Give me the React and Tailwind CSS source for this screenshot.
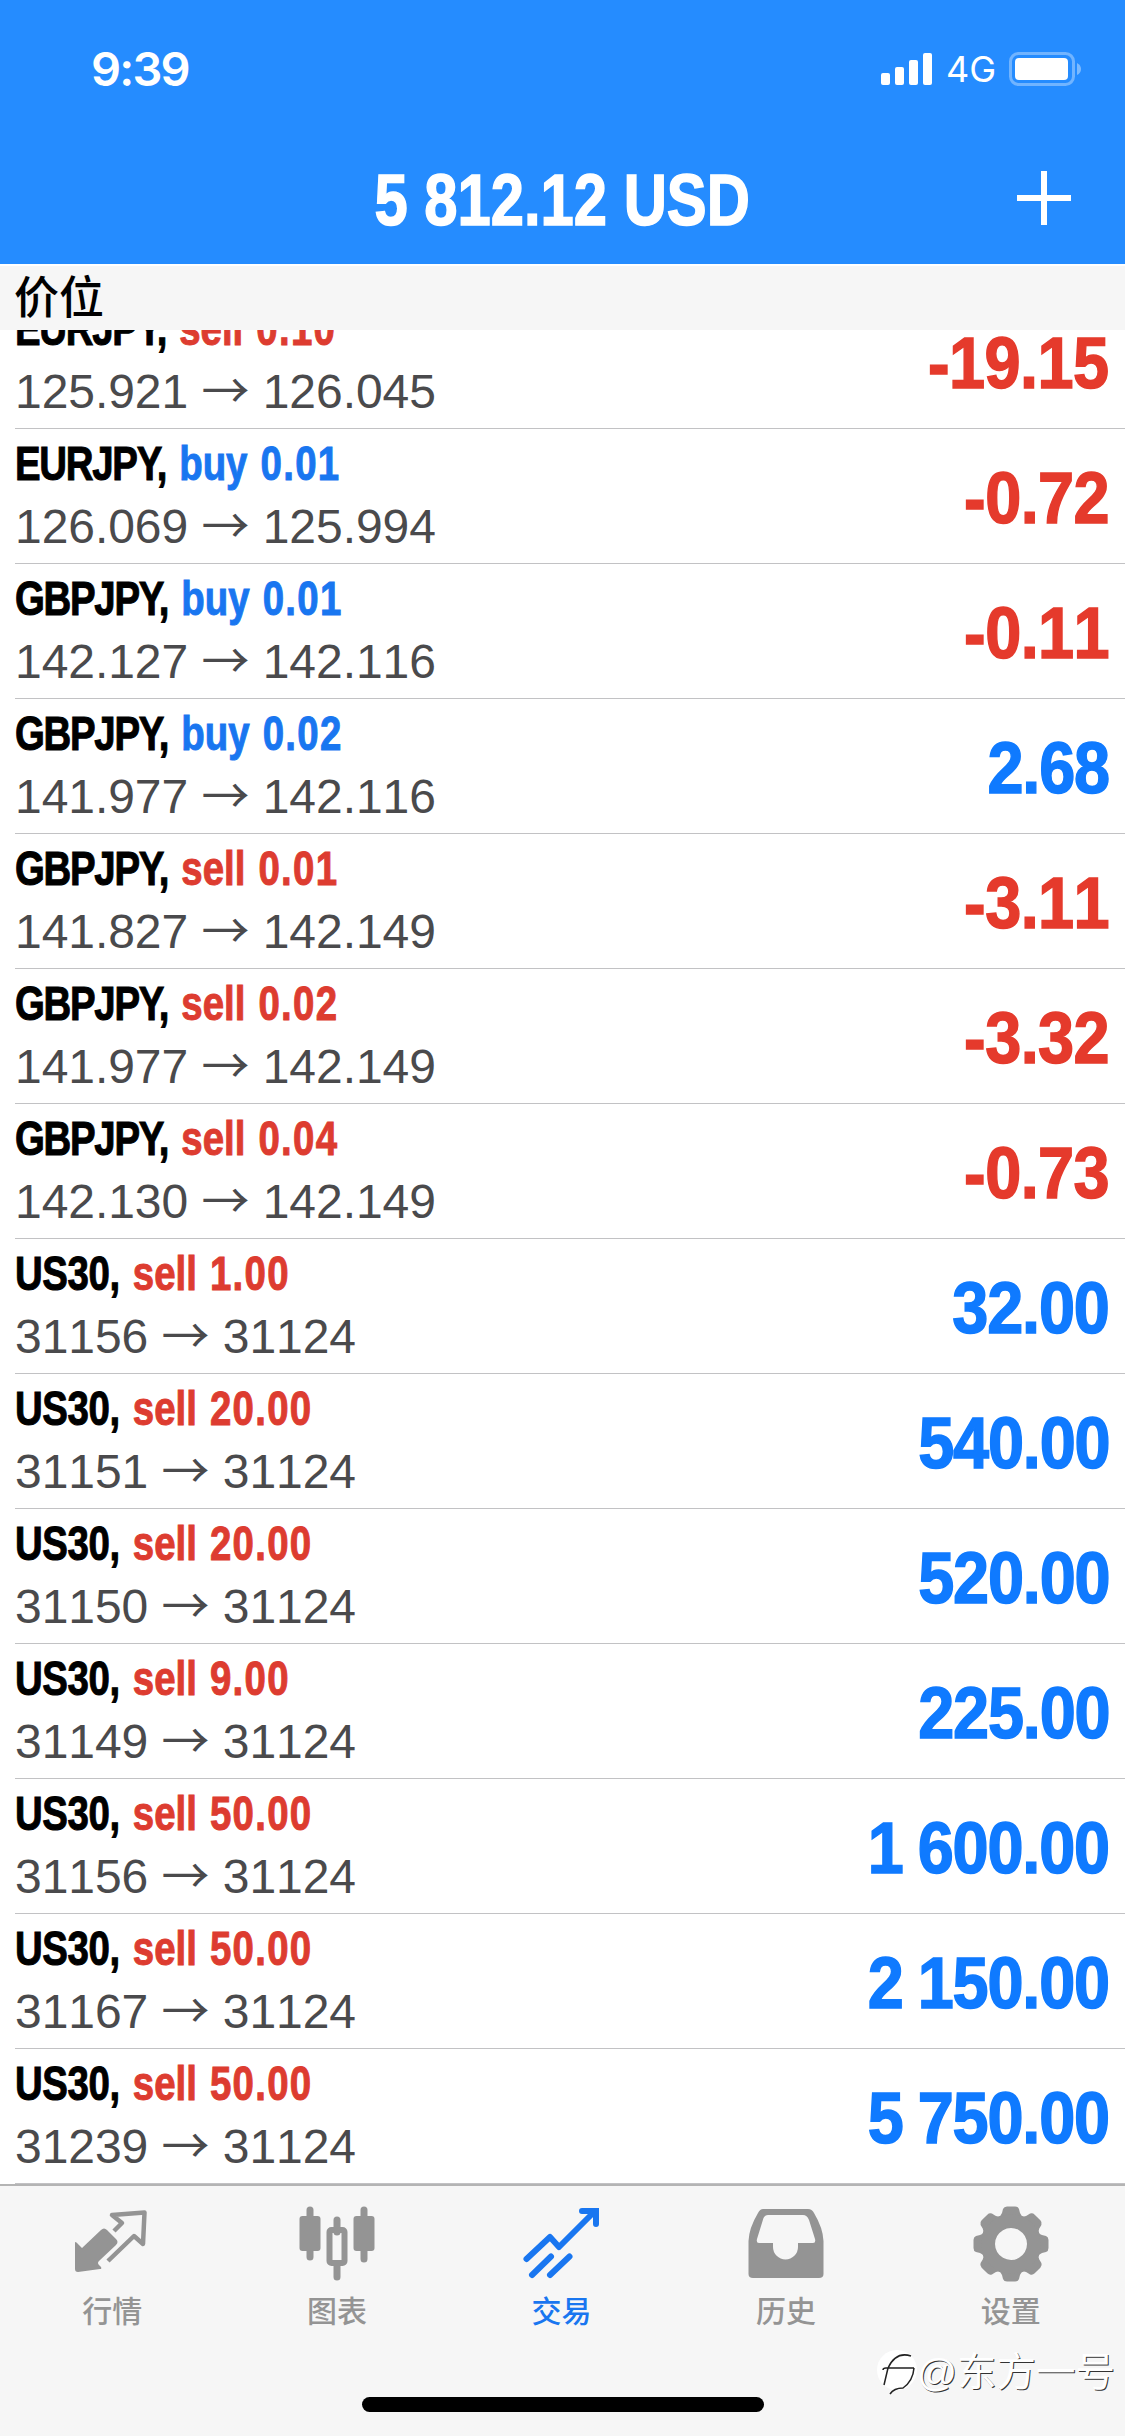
import React from "react";

const positions = [
  { symbol: "EURJPY", side: "sell", lots: "0.10", open: "125.921", current: "126.045", profit: "-19.15" },
  { symbol: "EURJPY", side: "buy", lots: "0.01", open: "126.069", current: "125.994", profit: "-0.72" },
  { symbol: "GBPJPY", side: "buy", lots: "0.01", open: "142.127", current: "142.116", profit: "-0.11" },
  { symbol: "GBPJPY", side: "buy", lots: "0.02", open: "141.977", current: "142.116", profit: "2.68" },
  { symbol: "GBPJPY", side: "sell", lots: "0.01", open: "141.827", current: "142.149", profit: "-3.11" },
  { symbol: "GBPJPY", side: "sell", lots: "0.02", open: "141.977", current: "142.149", profit: "-3.32" },
  { symbol: "GBPJPY", side: "sell", lots: "0.04", open: "142.130", current: "142.149", profit: "-0.73" },
  { symbol: "US30", side: "sell", lots: "1.00", open: "31156", current: "31124", profit: "32.00" },
  { symbol: "US30", side: "sell", lots: "20.00", open: "31151", current: "31124", profit: "540.00" },
  { symbol: "US30", side: "sell", lots: "20.00", open: "31150", current: "31124", profit: "520.00" },
  { symbol: "US30", side: "sell", lots: "9.00", open: "31149", current: "31124", profit: "225.00" },
  { symbol: "US30", side: "sell", lots: "50.00", open: "31156", current: "31124", profit: "1 600.00" },
  { symbol: "US30", side: "sell", lots: "50.00", open: "31167", current: "31124", profit: "2 150.00" },
  { symbol: "US30", side: "sell", lots: "50.00", open: "31239", current: "31124", profit: "5 750.00" },
];

const QuotesIcon = () => (
  <svg width="76" height="76" viewBox="0 0 76 76" fill="none">
    <path
      d="M1 37 Q1 35 3 37 L8 42 L27 24 Q30 21 33 24 L42 33 Q45 36 42 39 L25 55 Q23 57 25 59 L27 61 Q28 63 26 63 L4 66 Q1 66 1 63 Z"
      fill="currentColor"
    />
    <path
      d="M40 25 L48 17 L38 9 L70.500 6.500 L69 38 L60 30 L34 55"
      stroke="currentColor"
      strokeWidth="4.500"
      strokeLinejoin="round"
    />
  </svg>
);

const ChartIcon = () => (
  <svg width="76" height="76" viewBox="0 0 76 76" fill="none">
    <path d="M11 4 V51 M65 4 V53 M38 14 V26 M38 58 V71" stroke="currentColor" strokeWidth="7" strokeLinecap="round" />
    <rect x="0.500" y="10" width="21" height="35" rx="3" fill="currentColor" />
    <rect x="54.500" y="10" width="21" height="35" rx="3" fill="currentColor" />
    <rect x="30.500" y="24" width="15" height="33" rx="2" stroke="currentColor" strokeWidth="6" />
  </svg>
);

const TradeIcon = () => (
  <svg width="76" height="76" viewBox="0 0 76 76" fill="none" stroke="currentColor" strokeWidth="6">
    <path d="M3.500 53 L27 31 L36 41 L70 7" strokeLinecap="round" strokeLinejoin="round" />
    <path d="M59 5 H73 V18" strokeLinecap="round" />
    <path d="M9 69 L28 50.500 M27 69 L46.500 50.500" strokeLinecap="round" />
  </svg>
);

const HistoryIcon = () => (
  <svg width="76" height="76" viewBox="0 0 76 76">
    <path
      fillRule="evenodd"
      fill="currentColor"
      d="M15 3 H60 Q64 3 66 7 Q75 22 75.500 35 V68 Q75.500 72 71 72 H5 Q0.500 72 0.500 68 V35 Q1 22 10 7 Q12 3 15 3 Z M20 9 Q17 9 15.500 12 L9 33 Q8 37 11 37 H25 V41 A12.500 12.500 0 0 0 50 41 V37 H65 Q68 37 67 33 L61 14 Q59 9 55 9 Z"
    />
  </svg>
);

const SettingsIcon = () => (
  <svg width="76" height="76" viewBox="-38 -38 76 76">
    <g fill="currentColor">
      {[0, 45, 90, 135, 180, 225, 270, 315].map((angle) => (
        <path
          key={angle}
          transform={`rotate(${angle})`}
          d="M-13 -27 Q-10 -28 -9 -31 L-8 -35 Q-7 -37.500 -4 -37.500 H4 Q7 -37.500 8 -35 L9 -31 Q10 -28 13 -27 L12 -20 H-12 Z"
        />
      ))}
      <path fillRule="evenodd" d="M0 -29.500 A29.500 29.500 0 1 1 -0.010 -29.500 Z M0 -16 A16 16 0 1 0 0.010 -16 Z" />
    </g>
  </svg>
);

const tabs = [
  { label: "行情", Icon: QuotesIcon },
  { label: "图表", Icon: ChartIcon },
  { label: "交易", Icon: TradeIcon, active: true },
  { label: "历史", Icon: HistoryIcon },
  { label: "设置", Icon: SettingsIcon },
];

const StatusBar = () => (
  <div className="flex h-[132px] items-start justify-between pt-[51px] pr-[43px] pl-[91px] text-white">
    <span className="font-['Inter'] text-[47px] leading-[36px] font-semibold tracking-[-1.8px]">9:39</span>
    <div className="flex items-center">
      <svg width="52" height="35" viewBox="0 0 52 35" fill="white">
        <rect x="0" y="21" width="9" height="12" rx="2" />
        <rect x="14" y="15" width="9" height="18" rx="2" />
        <rect x="28" y="8" width="9" height="25" rx="2" />
        <rect x="42" y="1" width="9" height="32" rx="2" />
      </svg>
      <span className="ml-[13px] w-[48px] font-['Inter'] text-[36px] leading-[36px]">4G</span>
      <svg className="ml-[14px]" width="74" height="36" viewBox="0 0 74 36">
        <rect x="2.500" y="2.500" width="63" height="31" rx="8" fill="none" stroke="white" strokeOpacity="0.35" strokeWidth="3" />
        <rect x="7" y="7" width="53" height="22" rx="4" fill="white" />
        <path d="M69 12 Q73 14 73 18 Q73 22 69 24 Z" fill="white" fillOpacity="0.4" />
      </svg>
    </div>
  </div>
);

const Position = ({ item }) => {
  const { symbol, side, lots, open, current, profit } = item;

  return (
    <li className="ml-[15px] flex h-[135px] items-center justify-between border-b border-[#c2c2c4] pr-[16px]">
      <div>
        <p className="origin-left scale-x-[0.8] text-[48px] leading-[58px] font-bold whitespace-nowrap [-webkit-text-stroke:1px]">
          <span className={symbol === "US30" ? "tracking-[-0.5px]" : "tracking-[-1.6px]"}>{symbol},</span>
          <span className={`[word-spacing:3px] ${side === "buy" ? "text-[#1976f0]" : "text-[#dd3c30]"}`}>
            {" "}
            {side} <span className="tracking-[1.6px]">{lots}</span>
          </span>
        </p>
        <p className="mt-[3px] text-[48px] leading-[62px] tracking-[-0.05px] whitespace-nowrap text-[#4a4a4c] [font-kerning:none]">
          {open} <span className="font-['Noto_Sans_CJK_SC'] leading-none">→</span> {current}
        </p>
      </div>
      <span
        className={`mt-[4px] origin-right scale-x-[0.9] text-[72px] leading-none font-bold whitespace-nowrap [-webkit-text-stroke:1.5px] [font-kerning:none] [word-spacing:-2px] ${
          profit.startsWith("-") ? "tracking-[-0.6px] text-[#e53a2c]" : "tracking-[-1.3px] text-[#0f7aff]"
        }`}
      >
        {profit}
      </span>
    </li>
  );
};

export default function App() {
  return (
    <div className="flex h-[2436px] w-[1125px] flex-col overflow-hidden bg-white font-['Liberation_Sans','Noto_Sans_CJK_SC',sans-serif] text-black">
      {/* HEADER */}
      <header className="h-[264px] shrink-0 bg-[#258cff]">
        <StatusBar />
        <div className="grid h-[132px] grid-cols-[1fr_auto_1fr] items-center text-white">
          <h1 className="col-start-2 mt-[3px] scale-x-[0.83] text-[72px] leading-none font-bold whitespace-nowrap [-webkit-text-stroke:1.5px]">
            5 812.12 USD
          </h1>
          <svg className="mr-[54px] justify-self-end" width="54" height="54" viewBox="0 0 54 54" stroke="white" strokeWidth="6">
            <path d="M27 0 V54 M0 27 H54" />
          </svg>
        </div>
      </header>

      {/* SECTION TITLE */}
      <div className="flex h-[66px] shrink-0 items-center border-t-2 border-white bg-[#f6f6f6] pl-[14px]">
        <h2 className="mt-[2px] text-[45px] leading-[60px] font-medium">价位</h2>
      </div>

      {/* POSITIONS */}
      <main className="h-[1854px] shrink-0 overflow-hidden">
        <ul className="mt-[-36px]">
          {positions.map((item, i) => (
            <Position key={i} item={item} />
          ))}
        </ul>
      </main>

      {/* TAB BAR */}
      <nav className="relative flex-1 border-t-2 border-[#b4b4b4] bg-[#f6f6f6] pt-[20px]">
        <div className="mr-[2px] grid grid-cols-5">
          {tabs.map(({ label, Icon, active }) => (
            <div
              key={label}
              className={`flex flex-col items-center ${active ? "text-[#1976f0]" : "text-[#949494]"}`}
            >
              <Icon />
              <span className="mt-[10px] text-[30px] leading-[40px] font-medium">{label}</span>
            </div>
          ))}
        </div>
        <div className="absolute bottom-6 left-[362px] h-[15px] w-[402px] rounded-full bg-black" />

        {/* WATERMARK */}
        <div className="absolute top-[161px] right-[10px] flex items-center text-white">
          <svg width="42" height="50" viewBox="0 0 42 50">
            <circle cx="22" cy="23" r="20" fill="white" />
            <path
              d="M9 38 L13 21 M8 23 Q8 21 11 21 H39 M13 21 Q21 4 36 9 M39 21 Q38 34 28 41 Q19 41 15 47"
              fill="none"
              stroke="#222"
              strokeWidth="1.500"
            />
          </svg>
          <span className="text-[39.5px] leading-[50px] [text-shadow:1px_1px_0.5px_#333]">@东方一号</span>
        </div>
      </nav>
    </div>
  );
}
